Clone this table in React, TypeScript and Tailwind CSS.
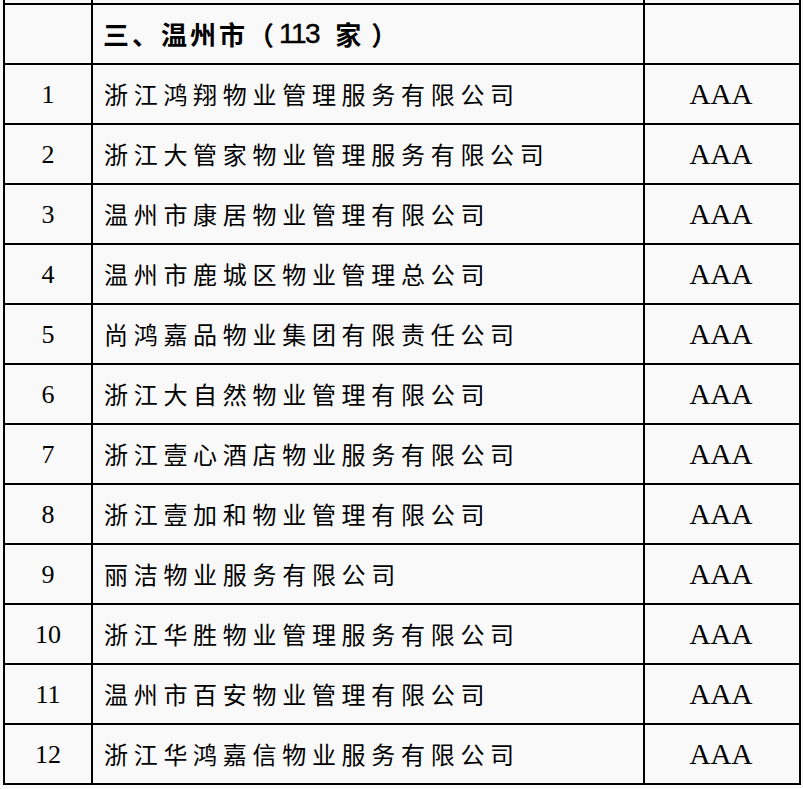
import React from "react";

const rows: [string, string][] = [
  ["1", "浙江鸿翔物业管理服务有限公司"],
  ["2", "浙江大管家物业管理服务有限公司"],
  ["3", "温州市康居物业管理有限公司"],
  ["4", "温州市鹿城区物业管理总公司"],
  ["5", "尚鸿嘉品物业集团有限责任公司"],
  ["6", "浙江大自然物业管理有限公司"],
  ["7", "浙江壹心酒店物业服务有限公司"],
  ["8", "浙江壹加和物业管理有限公司"],
  ["9", "丽洁物业服务有限公司"],
  ["10", "浙江华胜物业管理服务有限公司"],
  ["11", "温州市百安物业管理有限公司"],
  ["12", "浙江华鸿嘉信物业服务有限公司"],
];

const serif = "font-['Liberation_Serif','Times_New_Roman',serif]";
const cjk = "font-['Noto_Sans_CJK_SC','Noto_Sans',sans-serif]";

export default function App() {
  return (
    <div className="w-[803px] h-[789px] overflow-hidden bg-[#f9f9f9] text-black">
      <div className="ml-[3px] border-l-2 border-black w-[798px]">
        <div className="grid grid-cols-[88px_552px_156px]">
          {/* cut-off previous row */}
          <div className="h-[5px] border-r-2 border-b-2 border-black" />
          <div className="h-[5px] border-r-2 border-b-2 border-black" />
          <div className="h-[5px] border-r-2 border-b-2 border-black" />

          {/* header row */}
          <div className="h-[60px] border-r-2 border-b-2 border-black" />
          <div className="h-[60px] border-r-2 border-b-2 border-black flex items-center pl-[10px]">
            <span className={`${cjk} font-bold text-[26px] leading-none whitespace-nowrap flex items-center`}>
              <span className="tracking-[3px]">三、温州市（</span>
              <span className="ml-[2px] font-['Liberation_Sans',Arial,sans-serif] font-normal text-[28px] tracking-[-1.5px] [-webkit-text-stroke:0.4px_black]">113</span>
              <span className="ml-[16px]">家</span>
              <span className="ml-[10px]">）</span>
            </span>
          </div>
          <div className="h-[60px] border-r-2 border-b-2 border-black" />

          {rows.map(([n, name]) => (
            <React.Fragment key={n}>
              <div className="h-[60px] border-r-2 border-b-2 border-black flex items-center justify-center">
                <span className={`${serif} text-[26px] leading-none pt-[2px]`}>{n}</span>
              </div>
              <div className="h-[60px] border-r-2 border-b-2 border-black flex items-center pl-[11px]">
                <span className={`${cjk} text-[24px] leading-none tracking-[5.7px] whitespace-nowrap`}>{name}</span>
              </div>
              <div className="h-[60px] border-r-2 border-b-2 border-black flex items-center justify-center">
                <span className={`${serif} text-[29px] leading-none pt-[1px] pr-[2px]`}>AAA</span>
              </div>
            </React.Fragment>
          ))}
        </div>
      </div>
    </div>
  );
}
